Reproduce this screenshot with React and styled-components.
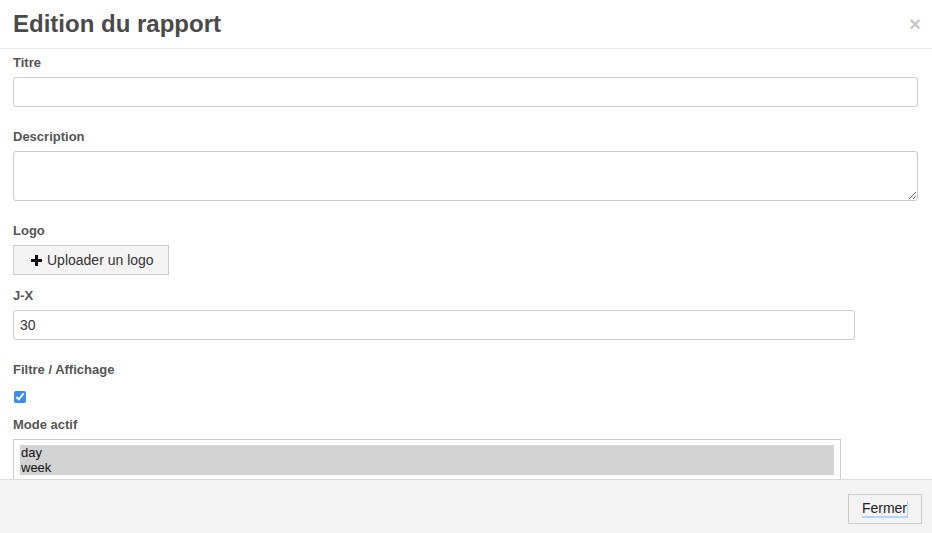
import React from 'react'
import styled, { createGlobalStyle } from 'styled-components'

const GlobalStyle = createGlobalStyle`
  html, body {
    margin: 0;
    padding: 0;
    background: #fff;
    font-family: "Liberation Sans", Arial, sans-serif;
    overflow: hidden;
  }
  * { box-sizing: border-box; }
`

const Modal = styled.div`
  display: flex;
  flex-direction: column;
  width: 932px;
  height: 533px;
  background: #fff;
`

const Header = styled.div`
  display: flex;
  align-items: center;
  justify-content: space-between;
  height: 49px;
  padding: 0 11px 0 13px;
  border-bottom: 1px solid #e8e8e8;
  flex-shrink: 0;
`

const Title = styled.h1`
  margin: 0;
  font-size: 24px;
  font-weight: bold;
  color: #4a4a4a;
`

const Close = styled.span`
  font-size: 20px;
  font-weight: bold;
  color: #c8c8c8;
  line-height: 1;
`

const Body = styled.div`
  flex: 1;
  overflow: hidden;
  padding: 4px 13px 0 13px;
`

const Group = styled.div`
  margin-bottom: ${p => p.$gap ?? 20}px;
`

const Label = styled.label`
  display: block;
  padding-top: 1px;
  line-height: 18px;
  margin-bottom: 5px;
  font-size: 13px;
  font-weight: bold;
  color: #555;
`

const Input = styled.input`
  display: block;
  width: ${p => p.$width || 905}px;
  height: 30px;
  padding: 0 6px;
  border: 1px solid #ccc;
  border-radius: 3px;
  font-family: "Liberation Sans", Arial, sans-serif;
  font-size: 14px;
  color: #333;
  outline: none;
`

const TextArea = styled.textarea`
  display: block;
  width: 905px;
  height: 50px;
  padding: 6px;
  border: 1px solid #ccc;
  border-radius: 3px;
  font-family: "Liberation Sans", Arial, sans-serif;
  font-size: 14px;
  outline: none;
`

const Button = styled.button`
  display: inline-flex;
  align-items: center;
  gap: 5px;
  height: 30px;
  padding: 0 ${p => p.$pad || 13}px 0 ${p => p.$padLeft || p.$pad || 13}px;
  background: #f4f4f4;
  border: 1px solid #ccc;
  border-radius: 0;
  font-family: "Liberation Sans", Arial, sans-serif;
  font-size: 14px;
  color: #333;
`

const Check = styled.input`
  display: block;
  width: 12px;
  height: 12px;
  margin: 12px 0 12px 1px;
  accent-color: #3b8eea;
`

const ListBox = styled.div`
  width: 828px;
  height: 60px;
  padding: 5px 6px 0 6px;
  border: 1px solid #ccc;
  border-bottom: none;
`

const Option = styled.div`
  height: 15px;
  line-height: 15px;
  padding-left: 1px;
  font-size: 13px;
  color: #111;
  background: ${p => (p.$selected ? '#d3d3d3' : 'transparent')};
`

const Footer = styled.div`
  display: flex;
  justify-content: flex-end;
  align-items: flex-start;
  height: 54px;
  padding: 14px 10px 0 0;
  background: #f4f4f4;
  border-top: 1px solid #dcdcdc;
  flex-shrink: 0;
`

const Caret = styled.span`
  border-bottom: 2px solid #b3d4fb;
  border-right: 1px solid #b3d4fb;
  line-height: 15px;
  color: #222;
`

const Plus = () => (
  <svg width="11" height="11" viewBox="0 0 11 11">
    <path d="M4 0h3v4h4v3H7v4H4V7H0V4h4z" fill="#111" />
  </svg>
)

export default function App() {
  return (
    <>
      <GlobalStyle />
      <Modal>
        <Header>
          <Title>Edition du rapport</Title>
          <Close>×</Close>
        </Header>
        <Body>
          <Group>
            <Label>Titre</Label>
            <Input type="text" />
          </Group>
          <Group>
            <Label>Description</Label>
            <TextArea />
          </Group>
          <Group $gap={11}>
            <Label>Logo</Label>
            <Button $padLeft={17} $pad={14}>
              <Plus />
              Uploader un logo
            </Button>
          </Group>
          <Group>
            <Label>J-X</Label>
            <Input type="text" $width={842} defaultValue="30" />
          </Group>
          <Group $gap={0}>
            <Label>Filtre / Affichage</Label>
            <Check type="checkbox" defaultChecked />
          </Group>
          <Group $gap={0}>
            <Label>Mode actif</Label>
            <ListBox role="listbox">
              <Option $selected>day</Option>
              <Option $selected>week</Option>
            </ListBox>
          </Group>
        </Body>
        <Footer>
          <Button $pad={13}>
            <Caret>Fermer</Caret>
          </Button>
        </Footer>
      </Modal>
    </>
  )
}
